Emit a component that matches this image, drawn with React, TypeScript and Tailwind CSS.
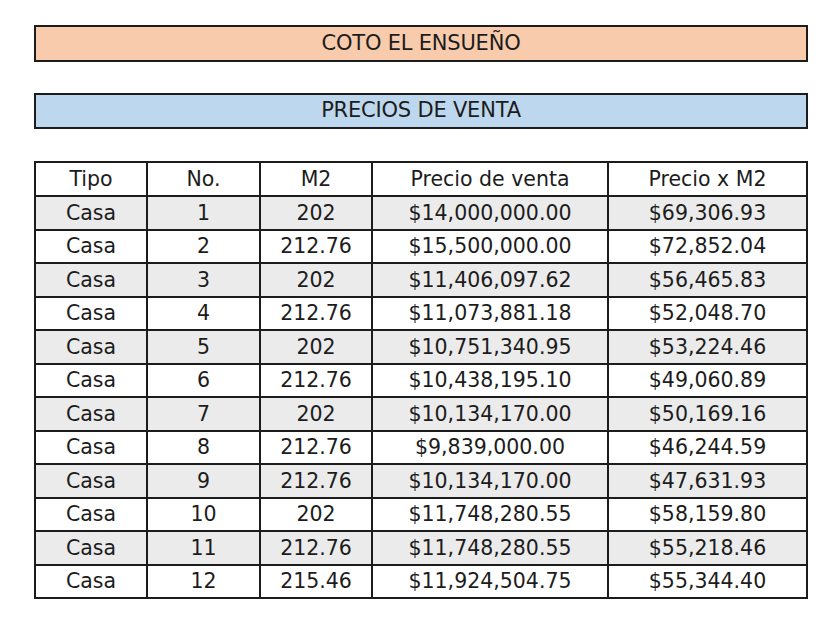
const rows = [
  ["Casa", "1", "202", "$14,000,000.00", "$69,306.93"],
  ["Casa", "2", "212.76", "$15,500,000.00", "$72,852.04"],
  ["Casa", "3", "202", "$11,406,097.62", "$56,465.83"],
  ["Casa", "4", "212.76", "$11,073,881.18", "$52,048.70"],
  ["Casa", "5", "202", "$10,751,340.95", "$53,224.46"],
  ["Casa", "6", "212.76", "$10,438,195.10", "$49,060.89"],
  ["Casa", "7", "202", "$10,134,170.00", "$50,169.16"],
  ["Casa", "8", "212.76", "$9,839,000.00", "$46,244.59"],
  ["Casa", "9", "212.76", "$10,134,170.00", "$47,631.93"],
  ["Casa", "10", "202", "$11,748,280.55", "$58,159.80"],
  ["Casa", "11", "212.76", "$11,748,280.55", "$55,218.46"],
  ["Casa", "12", "215.46", "$11,924,504.75", "$55,344.40"],
];

const headers = ["Tipo", "No.", "M2", "Precio de venta", "Precio x M2"];
const widths = ["w-[112px]", "w-[113px]", "w-[112px]", "w-[236px]", "w-[199px]"];

export default function App() {
  return (
    <div className="w-[840px] h-[630px] bg-white pt-[25px] pl-[34px] text-[#1c1c1c] font-['DejaVu_Sans',sans-serif]">
      <div className="w-[774px] h-[37px] border-2 border-[#1c1c1c] bg-[#f8cbad] flex items-center justify-center text-[21px] tracking-[-0.2px]">
        COTO EL ENSUEÑO
      </div>
      <div className="w-[774px] h-[36px] mt-[31px] border-2 border-[#1c1c1c] bg-[#bdd7ee] flex items-center justify-center text-[21px] tracking-[-0.2px]">
        PRECIOS DE VENTA
      </div>
      <table className="mt-[32px] border-collapse table-fixed w-[774px] text-[20.5px]">
        <thead>
          <tr className="h-[34px]">
            {headers.map((h, i) => (
              <th key={h} className={`${widths[i]} border-2 border-[#1c1c1c] font-normal text-center p-0 leading-none`}>
                {h}
              </th>
            ))}
          </tr>
        </thead>
        <tbody>
          {rows.map((r, ri) => (
            <tr key={ri} className={`h-[33.5px] ${ri % 2 === 0 ? "bg-[#ebebeb]" : "bg-white"}`}>
              {r.map((c, ci) => (
                <td key={ci} className="border-2 border-[#1c1c1c] text-center p-0 leading-none">
                  {c}
                </td>
              ))}
            </tr>
          ))}
        </tbody>
      </table>
    </div>
  );
}
